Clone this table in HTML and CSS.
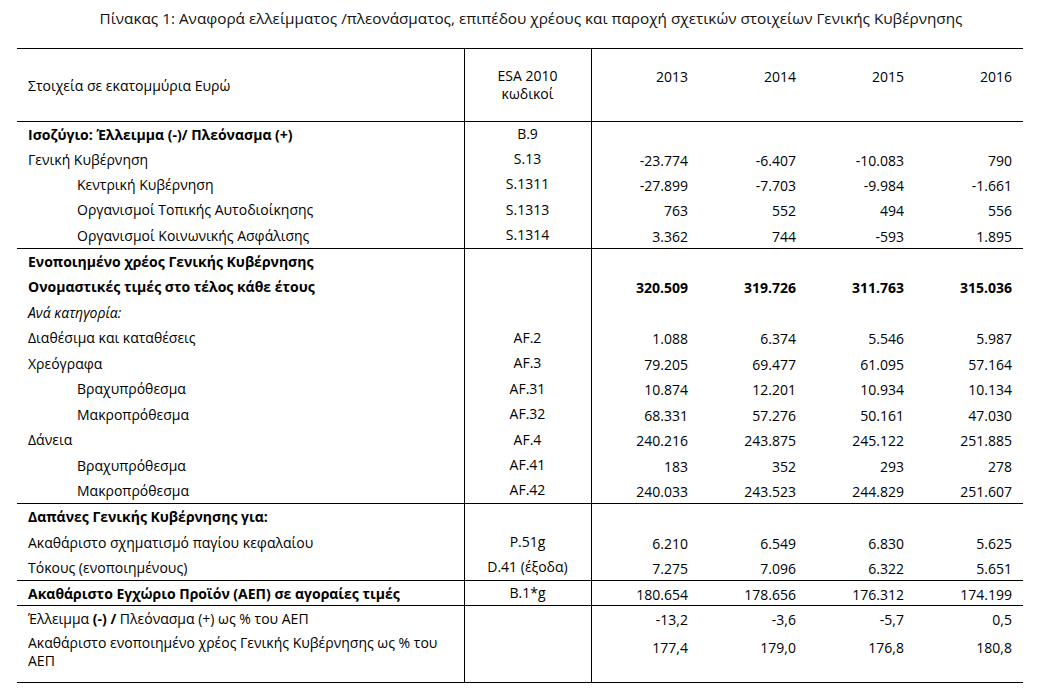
FILE: index.html
```html
<!DOCTYPE html>
<html lang="el">

<head>
    <meta charset="UTF-8">
    <meta name="viewport" content="width=device-width, initial-scale=1.0">
    <title>Πίνακας 1</title>
    <link rel="stylesheet" href="styles.css">
</head>

<body>

    <h1 class="title">Πίνακας 1: Αναφορά ελλείμματος /πλεονάσματος, επιπέδου χρέους και παροχή σχετικών στοιχείων Γενικής Κυβέρνησης</h1>

    <table class="report">
        <colgroup>
            <col class="col-label">
            <col class="col-code">
            <col class="col-year">
            <col class="col-year">
            <col class="col-year">
            <col class="col-year">
        </colgroup>

        <thead>
            <tr class="head">
                <th class="label">Στοιχεία σε εκατομμύρια Ευρώ</th>
                <th class="code">ESA 2010<br>κωδικοί</th>
                <th class="num">2013</th>
                <th class="num">2014</th>
                <th class="num">2015</th>
                <th class="num">2016</th>
            </tr>
        </thead>

        <!-- Ισοζύγιο -->
        <tbody>
            <tr>
                <td class="label bold">Ισοζύγιο: Έλλειμμα (-)/ Πλεόνασμα (+)</td>
                <td class="code">B.9</td>
                <td class="num"></td><td class="num"></td><td class="num"></td><td class="num"></td>
            </tr>
            <tr>
                <td class="label">Γενική Κυβέρνηση</td>
                <td class="code">S.13</td>
                <td class="num">-23.774</td><td class="num">-6.407</td><td class="num">-10.083</td><td class="num">790</td>
            </tr>
            <tr>
                <td class="label sub">Κεντρική Κυβέρνηση</td>
                <td class="code">S.1311</td>
                <td class="num">-27.899</td><td class="num">-7.703</td><td class="num">-9.984</td><td class="num">-1.661</td>
            </tr>
            <tr class="tall">
                <td class="label sub">Οργανισμοί Τοπικής Αυτοδιοίκησης</td>
                <td class="code">S.1313</td>
                <td class="num">763</td><td class="num">552</td><td class="num">494</td><td class="num">556</td>
            </tr>
            <tr class="tall">
                <td class="label sub">Οργανισμοί Κοινωνικής Ασφάλισης</td>
                <td class="code">S.1314</td>
                <td class="num">3.362</td><td class="num">744</td><td class="num">-593</td><td class="num">1.895</td>
            </tr>
        </tbody>

        <!-- Χρέος -->
        <tbody>
            <tr>
                <td class="label bold">Ενοποιημένο χρέος Γενικής Κυβέρνησης</td>
                <td class="code"></td>
                <td class="num"></td><td class="num"></td><td class="num"></td><td class="num"></td>
            </tr>
            <tr class="tall">
                <td class="label bold">Ονομαστικές τιμές στο τέλος κάθε έτους</td>
                <td class="code"></td>
                <td class="num bold">320.509</td><td class="num bold">319.726</td><td class="num bold">311.763</td><td class="num bold">315.036</td>
            </tr>
            <tr>
                <td class="label italic">Ανά κατηγορία:</td>
                <td class="code"></td>
                <td class="num"></td><td class="num"></td><td class="num"></td><td class="num"></td>
            </tr>
            <tr class="tall">
                <td class="label">Διαθέσιμα και καταθέσεις</td>
                <td class="code">AF.2</td>
                <td class="num">1.088</td><td class="num">6.374</td><td class="num">5.546</td><td class="num">5.987</td>
            </tr>
            <tr>
                <td class="label">Χρεόγραφα</td>
                <td class="code">AF.3</td>
                <td class="num">79.205</td><td class="num">69.477</td><td class="num">61.095</td><td class="num">57.164</td>
            </tr>
            <tr class="tall">
                <td class="label sub">Βραχυπρόθεσμα</td>
                <td class="code">AF.31</td>
                <td class="num">10.874</td><td class="num">12.201</td><td class="num">10.934</td><td class="num">10.134</td>
            </tr>
            <tr>
                <td class="label sub">Μακροπρόθεσμα</td>
                <td class="code">AF.32</td>
                <td class="num">68.331</td><td class="num">57.276</td><td class="num">50.161</td><td class="num">47.030</td>
            </tr>
            <tr class="tall">
                <td class="label">Δάνεια</td>
                <td class="code">AF.4</td>
                <td class="num">240.216</td><td class="num">243.875</td><td class="num">245.122</td><td class="num">251.885</td>
            </tr>
            <tr>
                <td class="label sub">Βραχυπρόθεσμα</td>
                <td class="code">AF.41</td>
                <td class="num">183</td><td class="num">352</td><td class="num">293</td><td class="num">278</td>
            </tr>
            <tr class="tall">
                <td class="label sub">Μακροπρόθεσμα</td>
                <td class="code">AF.42</td>
                <td class="num">240.033</td><td class="num">243.523</td><td class="num">244.829</td><td class="num">251.607</td>
            </tr>
        </tbody>

        <!-- Δαπάνες -->
        <tbody>
            <tr class="tall">
                <td class="label bold">Δαπάνες Γενικής Κυβέρνησης για:</td>
                <td class="code"></td>
                <td class="num"></td><td class="num"></td><td class="num"></td><td class="num"></td>
            </tr>
            <tr>
                <td class="label">Ακαθάριστο σχηματισμό παγίου κεφαλαίου</td>
                <td class="code">P.51g</td>
                <td class="num">6.210</td><td class="num">6.549</td><td class="num">6.830</td><td class="num">5.625</td>
            </tr>
            <tr class="tall">
                <td class="label">Τόκους (ενοποιημένους)</td>
                <td class="code">D.41 (έξοδα)</td>
                <td class="num">7.275</td><td class="num">7.096</td><td class="num">6.322</td><td class="num">5.651</td>
            </tr>
        </tbody>

        <!-- ΑΕΠ -->
        <tbody>
            <tr>
                <td class="label bold">Ακαθάριστο Εγχώριο Προϊόν (ΑΕΠ) σε αγοραίες τιμές</td>
                <td class="code">B.1*g</td>
                <td class="num">180.654</td><td class="num">178.656</td><td class="num">176.312</td><td class="num">174.199</td>
            </tr>
        </tbody>

        <!-- Ποσοστά -->
        <tbody>
            <tr>
                <td class="label">Έλλειμμα <b>(-) /</b> Πλεόνασμα (+) ως % του ΑΕΠ</td>
                <td class="code"></td>
                <td class="num">-13,2</td><td class="num">-3,6</td><td class="num">-5,7</td><td class="num">0,5</td>
            </tr>
            <tr class="double">
                <td class="label">Ακαθάριστο ενοποιημένο χρέος Γενικής Κυβέρνησης ως % του<br>ΑΕΠ</td>
                <td class="code"></td>
                <td class="num">177,4</td><td class="num">179,0</td><td class="num">176,8</td><td class="num">180,8</td>
            </tr>
        </tbody>
    </table>

</body>

</html>
```

FILE: styles.css
```css
* {
    box-sizing: border-box
}

body {
    font-family: "Open Sans", "Noto Sans", sans-serif;
    font-size: 14px;
    color: #000;
    background-color: #fff;
    margin: 0;
    padding: 0;
}

.title {
    font-size: 15.3px;
    font-weight: normal;
    text-align: center;
    line-height: 20px;
    margin: 8px 0 20px 22px;
    color: #111;
}

.report {
    border-collapse: collapse;
    table-layout: fixed;
    width: 1006px;
    margin-left: 17px;
    border-top: 1px solid #000;
    border-bottom: 1px solid #000;
}

.col-label {
    width: 447px;
}

.col-code {
    width: 127px;
}

.col-year {
    width: 108px;
}

.report tbody {
    border-top: 1px solid #000;
}

.report td,
.report th {
    padding: 0;
    height: 25px;
    line-height: 18px;
    vertical-align: middle;
    font-weight: normal;
    white-space: nowrap;
}

.report .label {
    text-align: left;
    padding-left: 11px;
    padding-top: 1px;
}

.report .sub {
    padding-left: 60px;
}

.report .code {
    text-align: center;
    border-left: 1px solid #000;
    border-right: 1px solid #000;
}

.report .num {
    text-align: right;
    padding-right: 11px;
    padding-top: 3px;
}

.report .bold {
    font-weight: bold;
}

.report .italic {
    font-style: italic;
}

/* header row */
.report .head th {
    height: 73px;
}

.report .head th.num {
    vertical-align: top;
    padding-top: 19px;
}

.report tr.tall td {
    height: 26px;
}

.report tr.double td {
    height: 52px;
    vertical-align: top;
    padding-top: 3px;
}

.report tr.double td.num {
    padding-top: 8px;
}
```
